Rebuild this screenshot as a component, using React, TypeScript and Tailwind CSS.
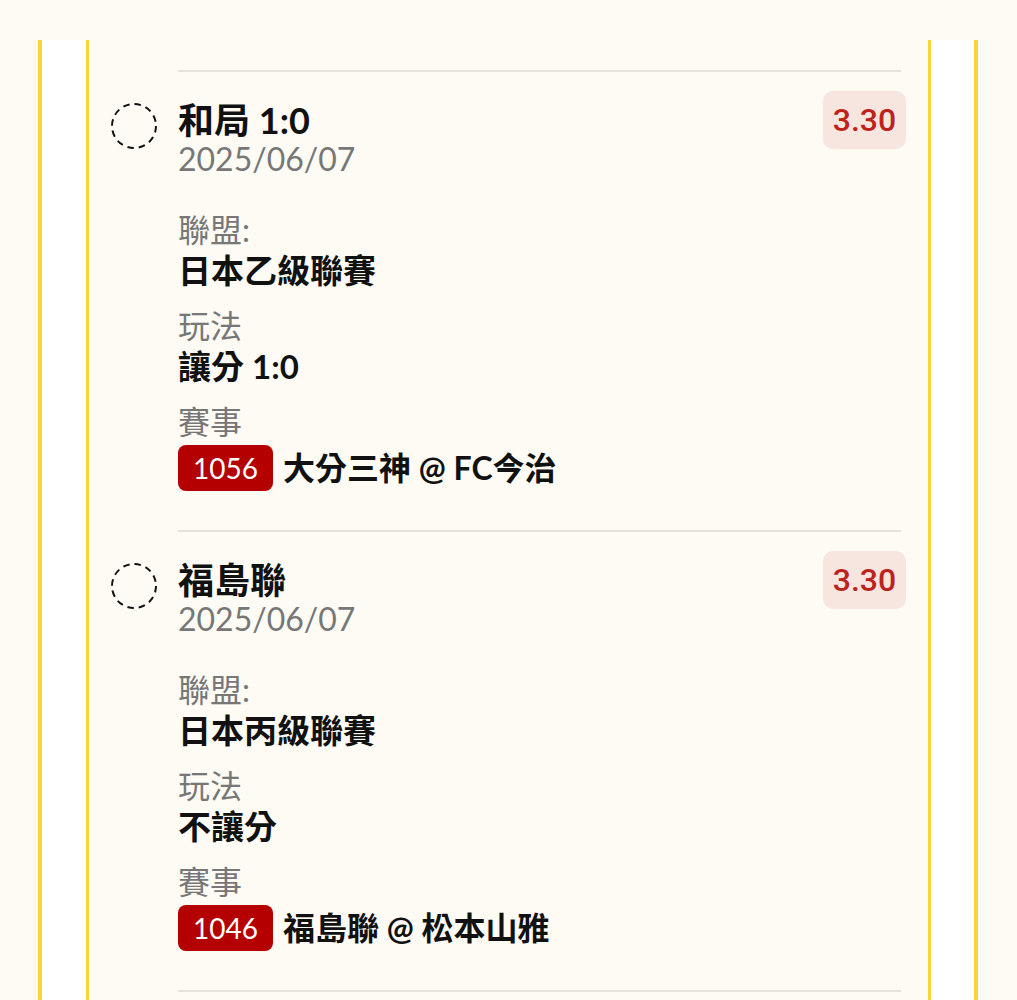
import React from 'react';

interface Bet {
  title: string;
  date: string;
  odds: string;
  league: string;
  play: string;
  code: string;
  match: string;
}

const bets: Bet[] = [
  {
    title: '和局 1:0',
    date: '2025/06/07',
    odds: '3.30',
    league: '日本乙級聯賽',
    play: '讓分 1:0',
    code: '1056',
    match: '大分三神 @ FC今治',
  },
  {
    title: '福島聯',
    date: '2025/06/07',
    odds: '3.30',
    league: '日本丙級聯賽',
    play: '不讓分',
    code: '1046',
    match: '福島聯 @ 松本山雅',
  },
];

const DashedCircle: React.FC = () => (
  <svg width="46" height="46" viewBox="0 0 46 46" className="shrink-0 mt-[12px]">
    <circle
      cx="23"
      cy="23"
      r="22"
      fill="none"
      stroke="#111"
      strokeWidth="2"
      strokeDasharray="6.5 5"
    />
  </svg>
);

const Divider: React.FC = () => <div className="ml-[89px] mr-[27px] h-[2px] bg-[#e6e3dc]" />;

const BetItem: React.FC<{ bet: Bet }> = ({ bet }) => {
  return (
    <div>
      <Divider />

      <div className="flex items-start px-[22px] pt-[19px] pb-[39px]">
        <DashedCircle />

        <div className="ml-[21px] flex-1 mt-[9px]">
          <div className="text-[36px] leading-[40px] font-bold text-[#111]">{bet.title}</div>
          <div className="text-[32px] leading-[38px] text-[#777]">{bet.date}</div>

          <div className="mt-[32px] flex flex-col gap-[16px]">
            <div>
              <div className="text-[32px] leading-[40px] text-[#777]">聯盟:</div>
              <div className="text-[33px] leading-[40px] font-bold text-[#111]">{bet.league}</div>
            </div>
            <div>
              <div className="text-[32px] leading-[40px] text-[#777]">玩法</div>
              <div className="text-[33px] leading-[40px] font-bold text-[#111]">{bet.play}</div>
            </div>
            <div>
              <div className="text-[32px] leading-[40px] text-[#777]">賽事</div>
              <div className="mt-[3px] flex items-center gap-[10px]">
                <span className="flex h-[46px] items-center rounded-[8px] bg-[#b50000] px-[15px] text-[28px] text-white">
                  {bet.code}
                </span>
                <span className="text-[32px] leading-[40px] font-bold text-[#111]">{bet.match}</span>
              </div>
            </div>
          </div>
        </div>

        {/* odds */}
        <div className="flex h-[58px] w-[83px] items-center justify-center rounded-[10px] bg-[#f6e6df] font-['Roboto',sans-serif] text-[32px] font-medium text-[#bd231c]">
          {bet.odds}
        </div>
      </div>
    </div>
  );
};

export default function App() {
  return (
    <div className="min-h-screen bg-[#fdfbf3] pt-[40px] font-['Lato','Noto_Sans_CJK_TC',sans-serif]">
      <div className="ml-[38px] w-[940px] border-x-4 border-[#f9d43a] bg-white pl-[44px] pr-[43px]">
        <div className="min-h-[1000px] border-x-[3px] border-[#f9d43a] bg-[#fdfbf3] pt-[30px]">
          {bets.map((bet, i) => (
            <BetItem key={i} bet={bet} />
          ))}
          <Divider />
        </div>
      </div>
    </div>
  );
}
